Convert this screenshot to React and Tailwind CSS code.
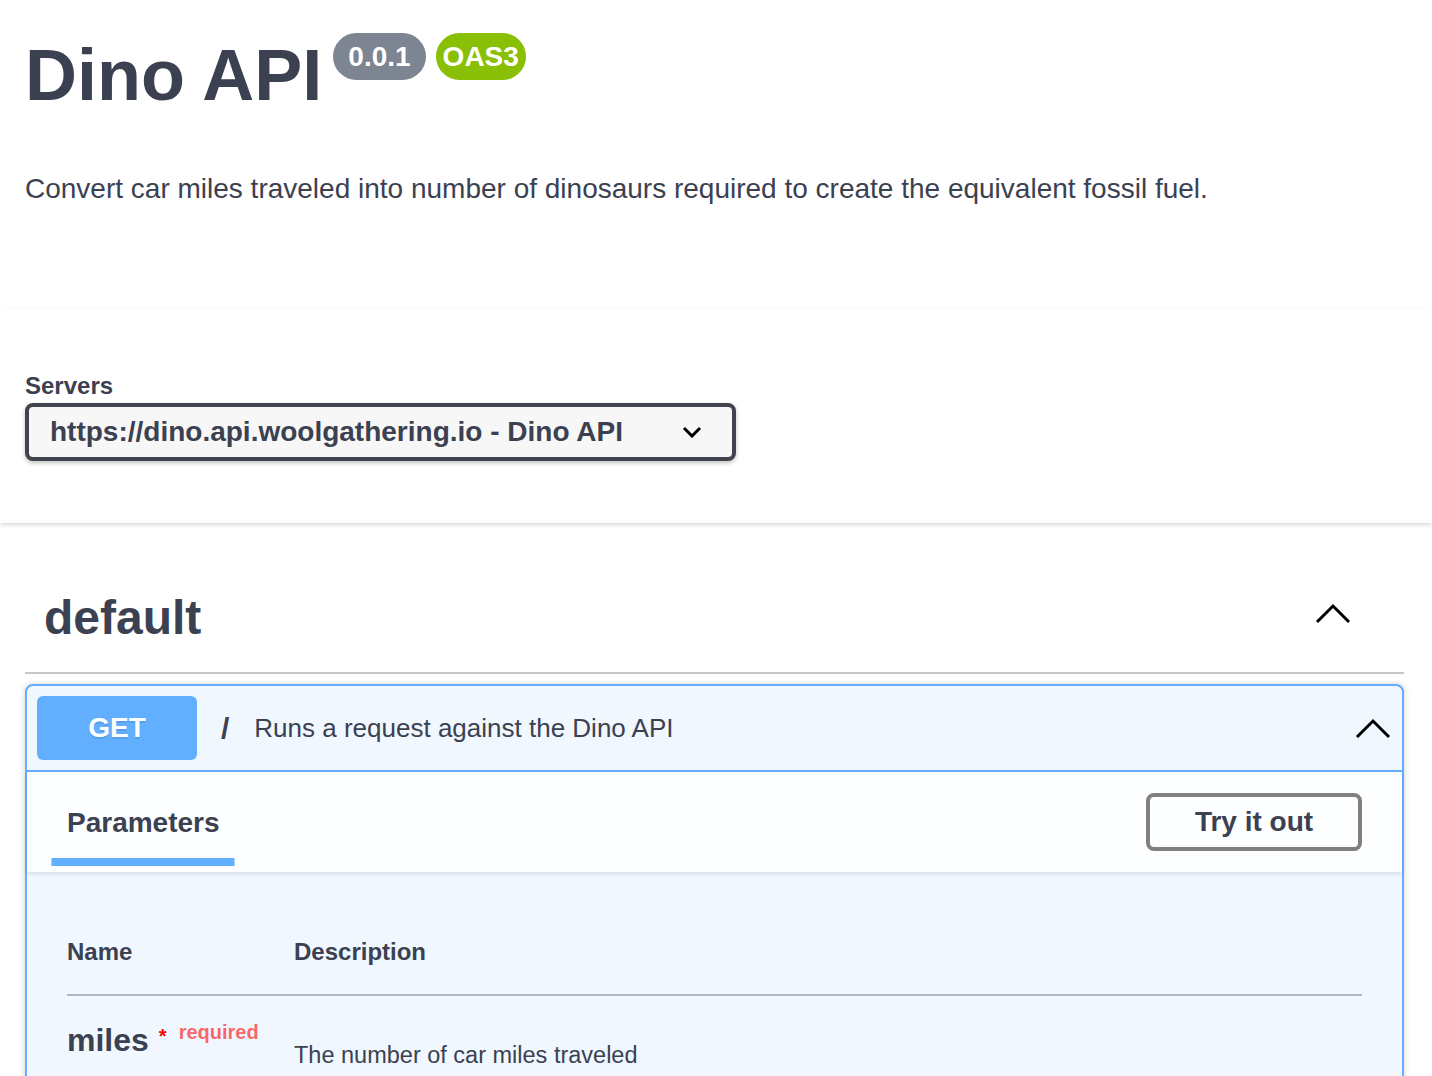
import React from 'react';

function ArrowUp({ className = '' }) {
  return (
    <svg width="36" height="22" viewBox="0 0 36 22" className={className} aria-hidden="true">
      <polyline points="2,20 18,4 34,20" fill="none" stroke="#000" strokeWidth="3" />
    </svg>
  );
}

function App() {
  return (
    <div className="min-h-screen bg-white font-[Liberation_Sans,Arial,sans-serif] text-[#3b4151] overflow-hidden">
      {/* info */}
      <div className="px-[25px]">
        <div className="flex items-start pt-[33px]">
          <h1 className="mt-[6px] text-[72px] font-bold leading-none">Dino API</h1>
          <span className="ml-[11px] flex h-[47px] items-center rounded-full bg-[#7d8492] px-[15px] text-[28px] font-bold text-white">
            0.0.1
          </span>
          <span className="ml-[10px] flex h-[47px] items-center rounded-full bg-[#89bf04] px-[7px] text-[28px] font-bold text-white">
            OAS3
          </span>
        </div>
        <p className="mt-[62px] mb-[104px] text-[28px] leading-[32px]">
          Convert car miles traveled into number of dinosaurs required to create the equivalent fossil fuel.
        </p>
      </div>

      {/* servers */}
      <div className="bg-white pt-[60px] pb-[62px] px-[25px] shadow-[0_2px_4px_0_rgba(0,0,0,0.15)]">
        <div className="text-[24px] font-bold leading-[34px]">Servers</div>
        <div className="flex h-[58px] w-[711px] items-center justify-between rounded-[8px] border-[4px] border-[#41444e] bg-[#f7f7f7] pl-[21px] pr-[30px] shadow-[0_2px_4px_0_rgba(0,0,0,0.25)]">
          <span className="text-[28px] font-bold">https://dino.api.woolgathering.io - Dino API</span>
          <svg width="20" height="12" viewBox="0 0 20 12" aria-hidden="true">
            <polyline points="2,2 10,10 18,2" fill="none" stroke="#000" strokeWidth="3" />
          </svg>
        </div>
      </div>

      {/* operations */}
      <div className="pl-[25px] pr-[28px]">
        <div className="mt-[51px] flex items-center justify-between border-b-2 border-[#c4c6cb] pt-[16px] pb-[27px] pl-[19px] pr-[53px]">
          <h3 className="text-[48px] font-bold leading-[55px]">default</h3>
          <ArrowUp className="mb-[10px]" />
        </div>

        <div className="mt-[10px] rounded-[8px] border-2 border-[#61affe] bg-[#f0f7ff] shadow-[0_0_6px_rgba(0,0,0,0.19)]">
          <div className="flex items-center border-b-2 border-[#61affe] p-[10px]">
            <span className="flex h-[64px] w-[160px] items-center justify-center rounded-[6px] bg-[#61affe] text-[28px] font-bold text-white [text-shadow:0_2px_0_rgba(0,0,0,0.1)]">
              GET
            </span>
            <span className="ml-[24px] text-[30px] font-semibold">/</span>
            <span className="ml-[25px] flex-1 text-[26px]">Runs a request against the Dino API</span>
            <ArrowUp className="mr-[1px]" />
          </div>

          <div className="relative flex h-[100px] items-center justify-between bg-[#fcfeff] px-[40px] shadow-[0_2px_4px_0_rgba(0,0,0,0.1)]">
            <h4 className="relative mt-[2px] text-[28px] font-bold leading-[32px]">
              Parameters
              <span className="absolute left-1/2 top-[51px] h-[8px] w-[120%] -translate-x-1/2 bg-[#61affe]" />
            </h4>
            <button className="h-[58px] w-[216px] rounded-[8px] border-[4px] border-[#808080] bg-transparent text-[28px] font-bold text-[#3b4151]">
              Try it out
            </button>
          </div>

          <div className="px-[40px] pt-[46px] pb-[40px]">
            <div className="flex border-b-2 border-[#b3b7bf] pt-[20px] pb-[28px] text-[24px] font-bold leading-[28px]">
              <div className="w-[227px]">Name</div>
              <div>Description</div>
            </div>
            <div className="flex">
              <div className="w-[227px] pt-[26px]">
                <span className="text-[32px] font-bold leading-[37px]">miles</span>
                <span className="relative top-[-8px] pl-[10px] text-[20px] font-bold text-[#ff0000]">*</span>
                <span className="relative top-[-12px] pl-[12px] text-[20px] font-bold text-[rgba(255,0,0,0.6)]">required</span>
              </div>
              <div className="pt-[45px] text-[23.5px] leading-[28px]">The number of car miles traveled</div>
            </div>
          </div>
        </div>
      </div>
    </div>
  );
}

export default App;
